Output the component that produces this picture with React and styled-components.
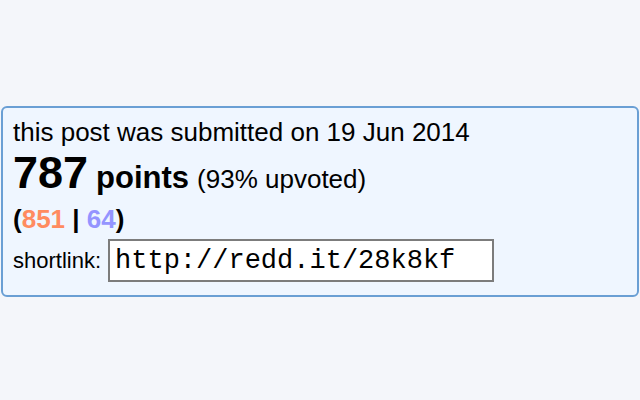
import styled, { createGlobalStyle } from "styled-components";

const GlobalStyle = createGlobalStyle`
  html, body {
    margin: 0;
    padding: 0;
    background: #f4f6fa;
  }
  body {
    font-family: "Liberation Sans", Arial, sans-serif;
    color: #000;
  }
`;

const Page = styled.div`
  width: 640px;
  height: 400px;
  padding: 106px 1px 0;
  box-sizing: border-box;
`;

const InfoBox = styled.div`
  border: 2px solid #6a9fd4;
  border-radius: 6px;
  background: #eff6ff;
  padding: 9px 10px 10px;
  height: 191px;
  box-sizing: border-box;
`;

const Date = styled.div`
  font-size: 26px;
  line-height: 30px;
`;

const Score = styled.div`
  display: flex;
  align-items: baseline;
  gap: 8px;
  line-height: 48px;
  margin-top: 2px;
`;

const Number = styled.span`
  font-size: 45px;
  font-weight: bold;
`;

const Word = styled.span`
  font-size: 31px;
  font-weight: bold;
`;

const Ratio = styled.span`
  font-size: 26px;
`;

const Votes = styled.div`
  font-size: 26px;
  font-weight: bold;
  line-height: 30px;
  margin-top: 1px;
`;

const Count = styled.span`
  color: ${(p) => p.$color};
`;

const ShortRow = styled.div`
  display: flex;
  align-items: center;
  gap: 7px;
  margin-top: 5px;
`;

const Label = styled.span`
  font-size: 22px;
`;

const LinkField = styled.input`
  width: 386px;
  height: 43px;
  box-sizing: border-box;
  border: 2px solid #7c7c7c;
  background: #fff;
  padding: 0 5px;
  font-family: "Liberation Mono", "Courier New", monospace;
  font-size: 27px;
  color: #000;
  outline: none;
`;

export default function App() {
  return (
    <>
      <GlobalStyle />
      <Page>
        <InfoBox>
          <Date>this post was submitted on 19 Jun 2014</Date>
          <Score>
            <Number>787</Number>
            <Word>points</Word>
            <Ratio>(93% upvoted)</Ratio>
          </Score>
          <Votes>
            (<Count $color="#ff8b60">851</Count> | <Count $color="#9494ff">64</Count>)
          </Votes>
          <ShortRow>
            <Label>shortlink:</Label>
            <LinkField readOnly value="http://redd.it/28k8kf" />
          </ShortRow>
        </InfoBox>
      </Page>
    </>
  );
}
